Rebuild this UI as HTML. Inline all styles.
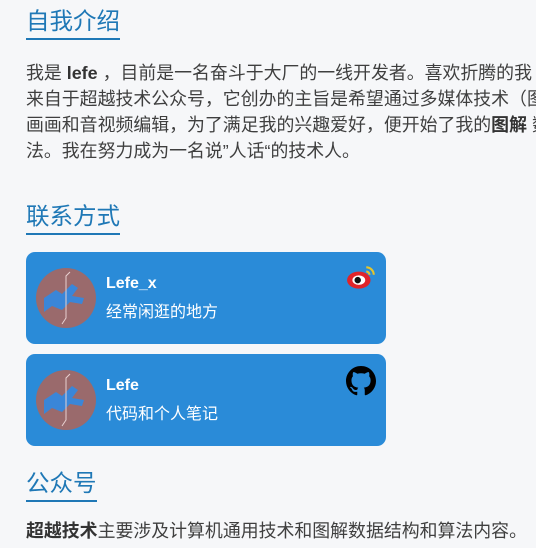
<!DOCTYPE html>
<html><head><meta charset="utf-8"><style>
*{margin:0;padding:0;box-sizing:border-box}
body{width:536px;height:548px;background:#f6f7f9;overflow:hidden;position:relative;font-family:"Liberation Sans","Noto Sans CJK SC",sans-serif;color:#3f3f3f}
.h{position:absolute;left:26px;color:#1f78b6;font-size:23.5px;line-height:30px;padding-bottom:2px;border-bottom:2px solid #1f78b6;white-space:nowrap}
.p{position:absolute;left:26px;font-size:17.9px;line-height:26px;white-space:nowrap}
b{font-weight:bold;color:#333}
.card{position:absolute;left:26px;width:360px;height:92px;background:#2a8bd8;border-radius:9px;color:#fff}
.av{position:absolute;left:10px;top:16px;width:60px;height:60px;border-radius:50%;background:#9a6a6c;overflow:hidden}
.n{position:absolute;left:80px;top:23px;font-size:16px;font-weight:bold}
.s{position:absolute;left:80px;top:46px;font-size:16px}
.ic{position:absolute;right:10px;top:12px}
</style></head><body>
<div class="h" style="top:6px">自我介绍</div>
<div class="p" style="top:60px">我是 <b>lefe</b> ，目前是一名奋斗于大厂的一线开发者。喜欢折腾的我<br>来自于超越技术公众号，它创办的主旨是希望通过多媒体技术（图<br>画画和音视频编辑，为了满足我的兴趣爱好，便开始了我的<b>图解</b> 数<br>法。我在努力成为一名说”人话“的技术人。</div>
<div class="h" style="top:201px">联系方式</div>
<div class="card" style="top:252px">
<div class="av"><svg width="60" height="60" viewBox="0 0 60 60"><path d="M8 30 l12-8 l6 4 l10-10 l6 4 l-6 8 l12 2 l-2 6 l-12-2 l-8 8 l-10-4 l-8 6z" fill="#3a86d8"/><path d="M34 4 L30 8 L30 50 L26 56" stroke="#e8d0d0" stroke-width="1" fill="none"/></svg></div>
<div class="n">Lefe_x</div><div class="s">经常闲逛的地方</div>
<svg class="ic" style="top:12px;right:8px" width="32" height="28" viewBox="0 0 30 26"><path d="M19 3a7 7 0 0 1 7 7M19 7a3 3 0 0 1 3 3" stroke="#e6c52a" stroke-width="2" fill="none"/><ellipse cx="12" cy="15" rx="11" ry="8" fill="#e0242a"/><ellipse cx="12" cy="15" rx="6" ry="4.5" fill="#fff"/><circle cx="11" cy="15" r="3" fill="#111"/></svg>
</div>
<div class="card" style="top:354px">
<div class="av"><svg width="60" height="60" viewBox="0 0 60 60"><path d="M8 30 l12-8 l6 4 l10-10 l6 4 l-6 8 l12 2 l-2 6 l-12-2 l-8 8 l-10-4 l-8 6z" fill="#3a86d8"/><path d="M34 4 L30 8 L30 50 L26 56" stroke="#e8d0d0" stroke-width="1" fill="none"/></svg></div>
<div class="n">Lefe</div><div class="s">代码和个人笔记</div>
<svg class="ic" width="30" height="30" viewBox="0 0 16 16"><path fill="#000" d="M8 0C3.58 0 0 3.58 0 8c0 3.54 2.29 6.53 5.47 7.590.4.07.55-.17.55-.38 0-.19-.01-.82-.01-1.49-2.01.37-2.53-.49-2.69-.94-.09-.23-.48-.94-.82-1.13-.28-.15-.68-.52-.01-.53.63-.01 1.08.58 1.23.82.72 1.21 1.87.87 2.33.66.07-.52.28-.87.51-1.07-1.78-.2-3.64-.89-3.64-3.95 0-.87.31-1.59.82-2.15-.08-.2-.36-1.02.08-2.12 0 0 .67-.21 2.2.82.64-.18 1.32-.27 2-.27.68 0 1.36.09 2 .27 1.53-1.04 2.2-.82 2.2-.82.44 1.1.16 1.92.08 2.12.51.56.82 1.27.82 2.15 0 3.07-1.87 3.75-3.65 3.95.29.25.54.73.54 1.48 0 1.07-.01 1.93-.01 2.2 0 .21.15.46.55.38A8.013 8.013 0 0016 8c0-4.420-3.58-8-8-8z"/></svg>
</div>
<div class="h" style="top:468px">公众号</div>
<div class="p" style="top:518px"><b>超越技术</b>主要涉及计算机通用技术和图解数据结构和算法内容。</div>
</body></html>
